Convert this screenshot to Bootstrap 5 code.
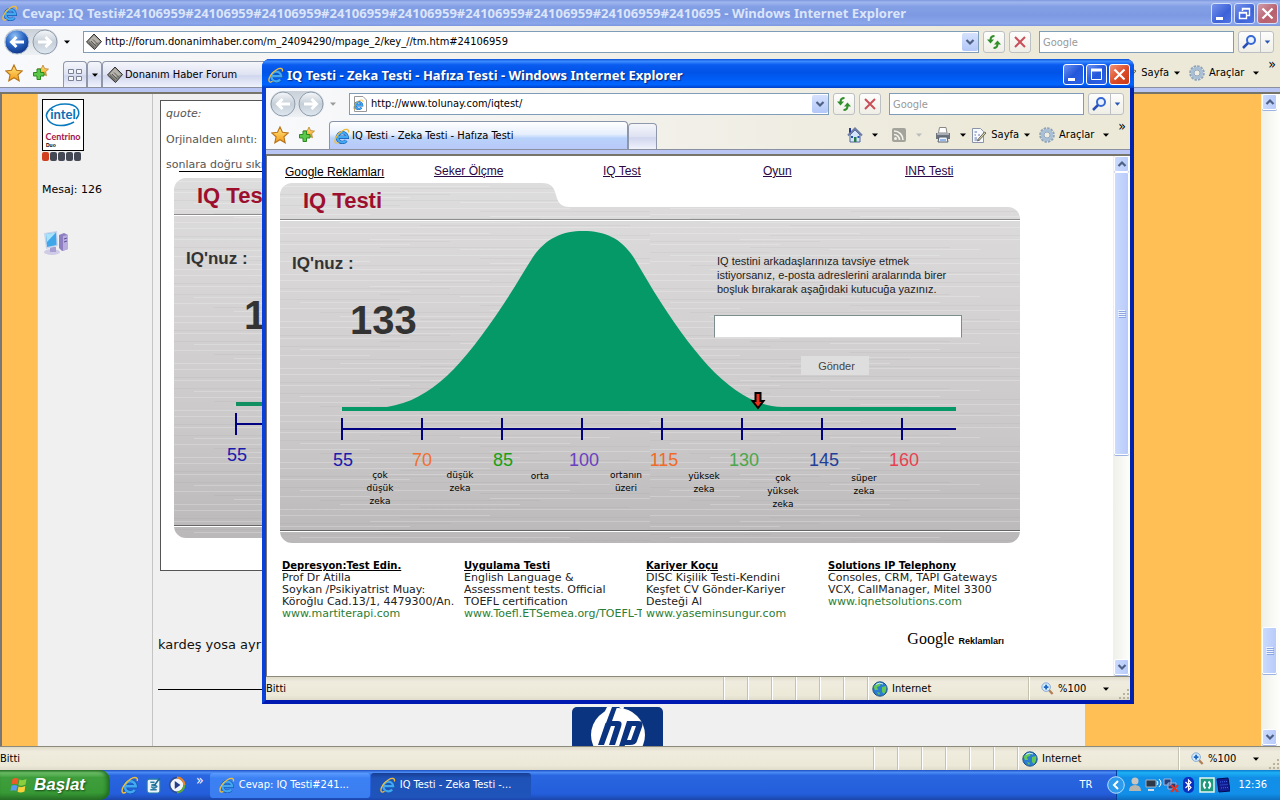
<!DOCTYPE html>
<html lang="tr">
<head>
<meta charset="utf-8">
<meta name="viewport" content="width=device-width, initial-scale=1">
<title>IQ Testi - Zeka Testi - Hafıza Testi</title>
<link href="https://cdn.jsdelivr.net/npm/bootstrap@5.3.0/dist/css/bootstrap.min.css" rel="stylesheet">
<style>
:root{--ui:"DejaVu Sans Condensed","DejaVu Sans",sans-serif;--verd:"DejaVu Sans",sans-serif;--arial:"Liberation Sans",sans-serif}
body{font:11px/14px var(--ui);color:#000;overflow:hidden;background:#f0f0f0}
svg{flex:none;display:block}
button{font:inherit;color:inherit;border:0;background:none;padding:0;display:flex;align-items:center;justify-content:center;flex:none}
input{font:inherit;border:0;padding:0;outline-offset:-1px;min-width:0;border-radius:0}
.min0{min-width:0;min-height:0}
/* window frame */
.titlebar{height:26px;flex:none;padding:0 2px;font:bold 13px/26px "Noto Sans",sans-serif;white-space:nowrap;color:#dbe5fa;background:linear-gradient(#7b96df,#a0b6ee 8%,#839fe5 25%,#7d99e2 60%,#8ba6ea 90%,#7c97df)}
.titlebar .cap-btn{width:21px;height:21px;border:1px solid #d5e0fa;border-radius:3px;background:linear-gradient(135deg,#7592ec,#3d62d8 60%,#4e73e4)}
.titlebar .cap-x{background:linear-gradient(135deg,#d09ba8,#b8606e 60%,#bd6c78)}
.front{position:absolute;left:262px;right:146px;top:59px;bottom:96px;border:4px solid #0831d9;border-top:0;border-color:#0a48dc #0022ac #0019b0 #0a3fd8;border-radius:8px 8px 0 0;background:#0a48dc}
.front .titlebar{height:29px;line-height:30px;margin:0 -4px;padding:2px 4px 0 6px;border-radius:8px 8px 0 0;color:#fff;text-shadow:1px 1px 1px #0a2a80;background:linear-gradient(#0a50d8,#3c8cff 8%,#0a5cf0 20%,#0053e6 45%,#0060fa 75%,#0064ff 88%,#0040c8)}
.front .titlebar .cap-btn{border-color:#fff;background:linear-gradient(135deg,#6d92f4,#2458da 50%,#2a62ea)}
.front .titlebar .cap-x{background:linear-gradient(135deg,#f09478,#dc4a26 55%,#c83a14)}
/* toolbars */
.chrome{background:linear-gradient(90deg,#f8f9fc,#f3f2ee 35%,#ece9d8 85%);flex:none}
.addr-row{height:32px;padding:0 6px 0 4px}
.navpair{gap:2px;background:linear-gradient(#c9d0d8,#eef1f4);border-radius:13px}
.field{height:22px;border:1px solid #7f9db9;background:#fff}
.addr{padding-left:2px;gap:3px}
.drop{width:16px;height:18px;background:linear-gradient(#d5e1fd,#b3c8f8);border-radius:2px}
.tool{width:22px;height:22px;border:1px solid #bcbfc4;border-radius:3px;background:linear-gradient(#fdfdfc,#efeee6)}
.search{width:195px;padding-left:3px}
.search::placeholder{color:#999;opacity:1}
.search-btn{width:36px}
.search-btn svg+svg{border-left:1px solid #bcbfc4;height:20px}
.tab-row{height:30px;border-bottom:1px solid #8a90a0;padding:0 4px 0 5px}
.favs{gap:10px;margin-right:14px}
.band{height:6px;background:#b9c6f3;border-bottom:2px solid #77756a}
.tab-on{height:28px;border:1px solid #8a95ac;border-bottom:0;border-radius:4px 4px 0 0;background:linear-gradient(#fff,#e6effd 45%,#b8d2fb 60%,#b9c9f8);padding-left:4px;gap:2px}
.tab-off{height:26px;border:1px solid #8f97aa;border-bottom:0;border-radius:4px 4px 0 0;background:linear-gradient(#f5f6fb,#dfe2f2 50%,#d0d6ee 55%,#f0f2fb);gap:2px}
.gap12{margin:0 12px 0 8px}
.more{align-self:flex-start;line-height:12px;font-size:14px}
/* scroll bars */
.sbar{width:17px;flex:none;background:linear-gradient(90deg,#f0f0ea,#fefefb);padding:0 1px 1px}
.sbtn,.thumb{width:15px;border:1px solid #fff;border-radius:2px;background:linear-gradient(90deg,#cbdafd,#b8cbf9);box-shadow:0 1px #9db2e0}
.sbtn{height:16px}
/* status bar */
.status{height:24px;flex:none;border-top:1px solid #8c8a7c;background:linear-gradient(#dedbc8,#efecdf 20%,#ece9d8 80%,#dfdccb);line-height:22px}
.cell{width:24px;border-left:1px solid #c5c2b0;box-shadow:inset 1px 0 #fff;align-self:stretch}
.zone{width:161px}
.zoom{width:102px;padding-left:12px}
/* forum page */
.orange{background:#ffbf55;flex:none}
.side{width:116px;flex:none;border-left:1px solid #cfcfcf;border-right:1px solid #c4c4c4;padding:5px 4px;font-family:var(--verd);background:#f0f0f0}
.forum{font-family:var(--verd);padding:6px 0 0 7px;background:#f0f0f0;white-space:nowrap}
.quote{border:1px solid #555;background:#fff;height:471px;color:#555;padding:6px 5px 5px;line-height:14px}
.quote p{margin:0 0 12px}
.quote .tail{margin:0;line-height:12px}
.rule{border-top:1px solid #000}
/* test page */
.page{background:#fff;font-family:var(--arial);padding:8px 0 0 13px;overflow:hidden}
.toplinks{display:grid;grid-template-columns:149px 169px 160px 142px 120px;font-size:12px;line-height:14px;padding-left:5px;height:19px}
.toplinks a{color:#2a0845}
.toplinks a:first-child{color:#000;padding-top:1px}
.panel{display:grid;width:740px;height:360px;font-family:var(--arial)}
.panel>*{grid-area:1/1}
.panel h1{font-size:22px;font-weight:700;line-height:36px;height:36px;margin:0;padding-left:23px;color:#9c0f2e}
.nar{font-family:"Liberation Sans Narrow",var(--arial);font-weight:700;color:#333}
.iqlabel{font-size:17px;line-height:24px;padding:33px 0 0 12px}
.score{font-size:40px;line-height:56px;padding:16px 0 0 70px}
.invite{width:248px;margin:35px 58px 0 0;line-height:14px;color:#222}
.invite label{padding-left:3px;white-space:nowrap}
.invite input{height:23px;border:1px solid #7d8c8c;border-bottom-color:#ddd;background:#fff;margin:19px 0 18px}
.send{width:68px;height:19px;background:#dedede;color:#444;margin-left:87px;padding-left:3px}
.ads{display:grid;grid-template-columns:repeat(4,182px);font:11px/12px var(--verd);padding:17px 0 0 2px;color:#222}
.ads div{white-space:nowrap;overflow:hidden;margin-right:4px}
.ads a{display:block;color:#2b7d33;text-decoration:none}
.ads a:first-child{color:#000;font-weight:700;font-size:10px;text-decoration:underline}
.gads{width:724px;font:16px/20px "Liberation Serif",serif;padding-top:9px}
.gads b{font:bold 9px/20px var(--arial)}
/* task bar */
.taskbar{height:30px;flex:none;color:#fff;background:linear-gradient(#1f4fc0,#4a8bf5 8%,#2a66e0 18%,#245edb 80%,#1b46ab)}
.quickbar{gap:6px;margin:0 6px 0 11px}
.start{width:110px;align-self:stretch;border-radius:0 10px 10px 0;background:linear-gradient(#2f7a2c,#6fc069 9%,#3f9e3c 25%,#379a35 75%,#2a7228);box-shadow:inset -3px 0 4px #1f6a20;font:italic bold 17px/30px var(--arial);text-shadow:1px 1px 2px #1a4a18;justify-content:flex-start;padding-left:9px}
.task{width:160px;height:25px;border-radius:3px;background:linear-gradient(#5b9bff,#3c81f3 20%,#3a7df0);justify-content:flex-start;padding-left:9px;color:#fff}
.task.on{background:linear-gradient(#173d92,#1e52b7 20%,#1f54bb)}
.tray{align-self:stretch;background:linear-gradient(#0d7bd0,#1db0f5 9%,#1290e8 25%,#118fe9 80%,#0d6fc0);border-left:1px solid #093d9a;padding-right:13px}
</style>
</head>
<body class="vh-100 d-flex flex-column position-relative">
<svg width="0" height="0" class="position-absolute" aria-hidden="true">
<defs>
<linearGradient id="gMetal" x1="0" y1="0" x2="0" y2="1"><stop offset="0" stop-color="#dedddd"/><stop offset=".3" stop-color="#d6d4d5"/><stop offset=".7" stop-color="#cac8c9"/><stop offset="1" stop-color="#bab8b9"/></linearGradient>
<pattern id="brush" width="370" height="47" patternUnits="userSpaceOnUse"><path d="M0 3.500H210M90 9.500H370M0 14.500H130M180 19.500H330M20 25.500H290M0 31.500H90M210 33.500H370M60 39.500H240M0 44.500H370" stroke="#fff" stroke-opacity=".22"/><path d="M120 5.500H370M0 11.500H170M100 17.500H300M0 22.500H120M200 28.500H370M40 35.500H260M140 42.500H350" stroke="#777" stroke-opacity=".07"/></pattern>
<radialGradient id="gBlue" cx=".4" cy=".25" r=".8"><stop offset="0" stop-color="#8fc0f5"/><stop offset=".5" stop-color="#2a66c4"/><stop offset="1" stop-color="#0c2f80"/></radialGradient>
<linearGradient id="gGrey" x1="0" y1="0" x2="0" y2="1"><stop offset="0" stop-color="#f6f8fa"/><stop offset=".5" stop-color="#c6cfd8"/><stop offset="1" stop-color="#dfe8f0"/></linearGradient>
<linearGradient id="gStar" x1="0" y1="0" x2="0" y2="1"><stop offset="0" stop-color="#ffe884"/><stop offset="1" stop-color="#f59a14"/></linearGradient>
<symbol id="plate" viewBox="0 0 740 360"><path d="M12 0H262C271 0 274 4 276 12S281 24 290 24H728A12 12 0 0 1 740 36V348A12 12 0 0 1 728 360H12A12 12 0 0 1 0 348V12A12 12 0 0 1 12 0Z" fill="url(#gMetal)"/><path d="M12 0H262C271 0 274 4 276 12S281 24 290 24H728A12 12 0 0 1 740 36V348A12 12 0 0 1 728 360H12A12 12 0 0 1 0 348V12A12 12 0 0 1 12 0Z" fill="url(#brush)"/><path d="M0 36.500H740" stroke="#8e8c8d"/><path d="M0 37.500H740M0 348.500H740" stroke="#fff"/><path d="M0 347.500H740" stroke="#666"/></symbol>
<symbol id="ie" viewBox="0 0 16 16"><path d="M4 9.200H13.200A4.900 4.900 0 1 0 12.200 12.500" fill="none" stroke="#1259b0" stroke-width="3.400"/><path d="M4 9.200H13.200A4.900 4.900 0 1 0 12.200 12.500" fill="none" stroke="#43a8f2" stroke-width="2.200"/><path d="M14.300 4.500C15.500 1 12 .6 8.500 2.700C4 5.400 .4 10.600 1 13.800C1.300 15.600 3 15.200 4.500 14.300" fill="none" stroke="#f0bd3a" stroke-width="1.300"/></symbol>
<symbol id="iepage" viewBox="0 0 16 16"><path d="M2.500 .5H11L14.500 4V15.500H2.500Z" fill="#fff" stroke="#999"/><use href="#ie" x="1" y="3" width="11" height="11"/></symbol>
<symbol id="back" viewBox="0 0 26 26"><circle cx="13" cy="13" r="12" fill="url(#gBlue)" stroke="#b6c4d6"/><path d="M20 13H8M12.500 8L7.500 13L12.500 18" fill="none" stroke="#fff" stroke-width="3"/></symbol>
<symbol id="backoff" viewBox="0 0 26 26"><circle cx="13" cy="13" r="12" fill="url(#gGrey)" stroke="#8e9cac"/><path d="M20 13H8M12.500 8L7.500 13L12.500 18" fill="none" stroke="#fff" stroke-width="3"/></symbol>
<symbol id="fwd" viewBox="0 0 26 26"><circle cx="13" cy="13" r="12" fill="url(#gGrey)" stroke="#8e9cac"/><path d="M6 13H18M13.500 8L18.500 13L13.500 18" fill="none" stroke="#fff" stroke-width="3"/></symbol>
<symbol id="tri" viewBox="0 0 8 8"><path d="M1 2.500H7L4 5.800Z" fill="currentColor"/></symbol>
<symbol id="chev" viewBox="0 0 10 10"><path d="M1.500 3L5 6.500L8.500 3" fill="none" stroke="#4d6185" stroke-width="2.200"/></symbol>
<symbol id="chevup" viewBox="0 0 10 10"><path d="M1.500 7L5 3.500L8.500 7" fill="none" stroke="#4d6185" stroke-width="2.200"/></symbol>
<symbol id="refresh" viewBox="0 0 16 16"><path d="M8.500 2Q4.500 2 4.500 6M7.500 14Q11.500 14 11.500 10" fill="none" stroke="#2f8f2a" stroke-width="2"/><path d="M1 5.500H8L4.500 9.500ZM8 10.500H15L11.500 6.500Z" fill="#2f8f2a"/></symbol>
<symbol id="stop" viewBox="0 0 16 16"><path d="M3 3L13 13M13 3L3 13" stroke="#c9505a" stroke-width="2"/></symbol>
<symbol id="lens" viewBox="0 0 16 16"><circle cx="10" cy="6" r="4" fill="#eaf2ff" stroke="#3568d4" stroke-width="2"/><path d="M7 9L2 14" stroke="#2850b8" stroke-width="2.500"/></symbol>
<symbol id="star" viewBox="0 0 16 16"><path d="M8 .8L10.200 5.500L15.300 6.100L11.500 9.600L12.600 14.900L8 12.200L3.400 14.900L4.500 9.600L.7 6.100L5.800 5.500Z" fill="url(#gStar)" stroke="#b8761c"/></symbol>
<symbol id="addstar" viewBox="0 0 16 16"><use href="#star" x="4" y="0" width="12" height="13"/><path d="M4 5H7.500V8.500H11V12H7.500V15.500H4V12H.5V8.500H4Z" fill="#5cc84a" stroke="#2a8a20"/></symbol>
<symbol id="quick" viewBox="0 0 16 14"><path d="M1.500 1.500H6.500V5.500H1.500ZM9.500 1.500H14.500V5.500H9.500ZM1.500 8.500H6.500V12.500H1.500ZM9.500 8.500H14.500V12.500H9.500Z" fill="#f6f7fb" stroke="#7b8296"/></symbol>
<symbol id="chip" viewBox="0 0 16 16"><path d="M8 0L15.500 7.500L8.500 15.500L.5 8Z" fill="#8c8a84" stroke="#33322e"/><path d="M8 1.500L14 7.500L8.500 10L3 6.500Z" fill="#b5b3ac"/><path d="M3 8.500L8.500 13.800M5 7L10 12M7 5.500L12 10.500" stroke="#5a5852"/></symbol>
<symbol id="home" viewBox="0 0 16 16"><path d="M3 8V15H13V8L8 3Z" fill="#d3e4fa" stroke="#51679c"/><path d="M1 8.500L8 1.500L15 8.500" fill="none" stroke="#6d7da4" stroke-width="2"/><path d="M2 1H4V5L2 6Z" fill="#223a9a"/><path d="M7 10H9.500V15H7Z" fill="#2a7a48"/><path d="M10.500 9H12.500V11H10.500ZM4 9H6V11H4Z" fill="#2854b8"/></symbol>
<symbol id="rss" viewBox="0 0 16 16"><rect x="1" y="1" width="14" height="14" rx="2" fill="#a3a39c"/><circle cx="4.500" cy="11.500" r="1.500" fill="#f4f3ea"/><path d="M3 7.500A5.500 5.500 0 0 1 8.500 13M3 4A9 9 0 0 1 12 13" fill="none" stroke="#f4f3ea" stroke-width="1.600"/></symbol>
<symbol id="print" viewBox="0 0 16 16"><path d="M4.500 .5H11L12 6H3.500Z" fill="#fff" stroke="#888"/><path d="M1 6H15V12H1Z" fill="#6d737c"/><path d="M2 6H14V8H2Z" fill="#a9aeb6"/><path d="M4 10H12L13 15H3Z" fill="#eef3fb" stroke="#56606e"/><path d="M5 13H11" stroke="#3d7edb"/></symbol>
<symbol id="pageic" viewBox="0 0 16 16"><path d="M1.500 1.500H9.500L12.500 4.500V15.500H1.500Z" fill="#f7f9fd" stroke="#8994a8"/><path d="M3.500 5H6M3.500 8H5M7 8H9M3.500 11H6M3.500 13H9" stroke="#6277b8"/><path d="M15 6L8.500 13L6.500 13.800L7.500 11.800L13.500 5Z" fill="#d8d2ae" stroke="#6a6a5c"/></symbol>
<symbol id="gear" viewBox="0 0 16 16"><circle cx="8" cy="8" r="6.600" fill="none" stroke="#8fa3b8" stroke-width="2.400" stroke-dasharray="2.450 1"/><circle cx="8" cy="8" r="4.700" fill="#f0f1ec" stroke="#a9bfd6" stroke-width="3"/><circle cx="8" cy="8" r="3" fill="#efede2" stroke="#7e98b4" stroke-width=".8"/></symbol>
<symbol id="globe" viewBox="0 0 16 16"><circle cx="8" cy="8" r="7.200" fill="#2a7cd0" stroke="#1b5288"/><path d="M3 4Q6 1 9 2L8 5L5 6L6 9L3 9Q1 6 3 4ZM10 6L14 5Q15 9 12 13L10 11ZM5 11L8 12L7 14Z" fill="#64c854"/><path d="M4 3.500Q7 1 11 3" fill="none" stroke="#c9ecff"/></symbol>
<symbol id="zoomic" viewBox="0 0 14 14"><path d="M8 8L12.500 13" stroke="#b0805a" stroke-width="2.500"/><circle cx="5.500" cy="5.500" r="4.600" fill="#d8ecff" stroke="#7ba4cc"/><path d="M3 5.500H8M5.500 3V8" stroke="#1d66c0" stroke-width="2"/></symbol>
<symbol id="grip" viewBox="0 0 12 12"><path d="M9 1H11V3H9ZM9 5H11V7H9ZM5 5H7V7H5ZM9 9H11V11H9ZM5 9H7V11H5ZM1 9H3V11H1Z" fill="#b8b39c"/></symbol>
<symbol id="gripv" viewBox="0 0 8 8"><path d="M0 .5H7M0 2.500H7M0 4.500H7M0 6.500H7" stroke="#eef4fe"/><path d="M1 1.500H8M1 3.500H8M1 5.500H8M1 7.500H8" stroke="#8ca6e4"/></symbol>
<symbol id="cmin" viewBox="0 0 19 19"><path d="M4 13H11V16H4Z" fill="#fff"/></symbol>
<symbol id="cmax" viewBox="0 0 19 19"><path d="M4.500 5V14.500H14.500V5" fill="none" stroke="#fff"/><path d="M4 3.500H15V6.500H4Z" fill="#fff"/></symbol>
<symbol id="crest" viewBox="0 0 19 19"><path d="M7.500 7V4.500H14.500V11.500H12M4.500 8.500H11.500V14.500H4.500ZM7 5H15M4 9H12" fill="none" stroke="#fff" stroke-width="1.400"/></symbol>
<symbol id="cx" viewBox="0 0 19 19"><path d="M4.500 4.500L14.500 14.500M14.500 4.500L4.500 14.500" stroke="#fff" stroke-width="2.200"/></symbol>
</defs>
</svg>

<!-- forum window -->
<section class="d-flex flex-column flex-fill min0" aria-label="Donanım Haber Forum">
  <div class="titlebar d-flex align-items-center">
    <svg width="16" height="16" class="me-1"><use href="#ie"/></svg>
    <span class="flex-fill overflow-hidden min0">Cevap: IQ Testi#24106959#24106959#24106959#24106959#24106959#24106959#24106959#24106959#2410695 - Windows Internet Explorer</span>
    <div class="d-flex" style="gap:2px"><button class="cap-btn" aria-label="Simge durumuna küçült"><svg width="19" height="19"><use href="#cmin"/></svg></button><button class="cap-btn" aria-label="Geri yükle"><svg width="19" height="19"><use href="#crest"/></svg></button><button class="cap-btn cap-x" aria-label="Kapat"><svg width="19" height="19"><use href="#cx"/></svg></button></div>
  </div>
  <div class="chrome">
    <div class="addr-row d-flex align-items-center">
      <div class="navpair d-flex"><button aria-label="Geri"><svg width="26" height="26"><use href="#back"/></svg></button><button aria-label="İleri"><svg width="26" height="26"><use href="#fwd"/></svg></button></div>
      <button style="margin:0 12px 0 5px" aria-label="Geçmiş"><svg width="8" height="8"><use href="#tri"/></svg></button>
      <div class="field addr flex-fill min0 d-flex align-items-center"><svg width="16" height="16"><use href="#chip"/></svg><input class="flex-fill" aria-label="Adres" value="http://forum.donanimhaber.com/m_24094290/mpage_2/key_//tm.htm#24106959"><button class="drop" aria-label="Adresler"><svg width="10" height="10"><use href="#chev"/></svg></button></div>
      <button class="tool ms-1" aria-label="Yenile"><svg width="16" height="16"><use href="#refresh"/></svg></button><button class="tool mx-1" aria-label="Dur"><svg width="16" height="16"><use href="#stop"/></svg></button>
      <input class="field search mx-1" type="search" placeholder="Google" aria-label="Google araması">
      <button class="tool search-btn" aria-label="Ara"><svg width="21" height="16" viewBox="-2 0 21 16"><use href="#lens" width="16" height="16"/></svg><svg width="13" height="20" viewBox="0 0 13 20" color="#2a56b4"><use href="#tri" x="3" y="6" width="8" height="8"/></svg></button>
    </div>
    <div class="tab-row d-flex align-items-end">
      <div class="favs d-flex align-self-center"><svg width="18" height="18"><use href="#star"/></svg><svg width="16" height="16"><use href="#addstar"/></svg></div>
      <button class="tab-off" style="width:24px" aria-label="Hızlı sekmeler"><svg width="16" height="14"><use href="#quick"/></svg></button><button class="tab-off" style="width:15px" aria-label="Sekme listesi"><svg width="8" height="8"><use href="#tri"/></svg></button>
      <div class="tab-off d-flex align-items-center ps-1" style="width:300px"><svg width="16" height="16"><use href="#chip"/></svg><span>Donanım Haber Forum</span></div>
      <div class="ms-auto d-flex align-items-center align-self-center"><svg width="16" height="16"><use href="#pageic"/></svg><a href="#" class="text-reset text-decoration-none mx-1">Sayfa</a><svg width="8" height="8" class="me-2"><use href="#tri"/></svg><svg width="16" height="16"><use href="#gear"/></svg><a href="#" class="text-reset text-decoration-none mx-1">Araçlar</a><svg width="8" height="8" class="ms-1 me-2"><use href="#tri"/></svg></div><span class="more">»</span>
    </div>
    <div class="band"></div>
  </div>
  <div class="d-flex flex-fill min0 overflow-hidden bg-white">
    <div class="orange" style="width:37px;border-left:2px solid #777"></div>
    <aside class="side">
      <svg width="42" height="52" viewBox="0 0 42 52"><rect x=".5" y=".5" width="41" height="51" fill="#fff" stroke="#000"/><path d="M6 21C1 14 10 5 23 5C36 5 40 13 34 20M6 21C12 29 25 27 32 23" fill="none" stroke="#0a7abf" stroke-width="1.500"/><text x="21" y="20" font-family="Lato,sans-serif" font-weight="700" font-size="13" fill="#0a6fb5" text-anchor="middle">intel</text><text x="21" y="41" font-family="Lato,sans-serif" font-weight="700" font-size="9" fill="#a3154c" text-anchor="middle">Centrino</text><text x="4" y="48" font-family="Liberation Sans,sans-serif" font-weight="700" font-size="5">Duo</text></svg>
      <svg width="42" height="11" viewBox="0 0 42 11"><rect x="0" y="1" width="7" height="9" rx="2" fill="#d04020"/><rect x="8" y="1" width="7" height="9" rx="2" fill="#444854"/><rect x="16" y="1" width="7" height="9" rx="2" fill="#444854"/><rect x="24" y="1" width="7" height="9" rx="2" fill="#444854"/><rect x="32" y="1" width="7" height="9" rx="2" fill="#444854"/></svg>
      <div style="margin:21px 0 33px">Mesaj: 126</div>
      <svg width="28" height="26" viewBox="0 0 28 26"><path d="M17 5L22 3L26 5V19L20 21L17 18Z" fill="#8e7fc0"/><path d="M21 6L26 5V19L21 21Z" fill="#b9acdf"/><path d="M22 9L25 8M22 12L25 11" stroke="#5d4e96"/><ellipse cx="10" cy="22" rx="8" ry="3" fill="#cfcbe6"/><path d="M8 17H14V22H8Z" fill="#a79ed2"/><path d="M2 3L15 1L16 16L4 19Z" fill="#c8d4ea"/><path d="M4 4L14 2.500L14.500 15L5 17Z" fill="#3fa6ea"/><path d="M4 4L14 2.500L5 12Z" fill="#a8e2fb"/></svg>
    </aside>
    <main class="forum flex-fill min0">
      <div class="quote overflow-hidden">
        <p><i>quote:</i></p><p>Orjinalden alıntı:</p><p class="tail">sonlara doğru sıkıldım</p>
        <div class="rule" style="margin:0 0 6px 13px"></div>
        <div class="panel" style="margin-left:8px">
          <svg width="740" height="360"><use href="#plate"/></svg>
          <svg width="740" height="360" viewBox="280 183 740 360"><path d="M342 407H956V411H342Z" fill="#129062"/><path d="M341 429H956M342 418V440" stroke="#000080" stroke-width="2"/><text x="343" y="466" font-size="18" fill="#1a1aae" text-anchor="middle">55</text></svg>
          <div><h1>IQ Testi</h1><div class="nar iqlabel">IQ'nuz :</div><div class="nar score">133</div></div>
        </div>
      </div>
      <div style="font-size:13px;line-height:20px;margin:64px 0 34px -2px;color:#111">kardeş yosa ayrı</div>
      <div class="rule" style="margin-left:-2px;width:600px"></div>
      <svg width="91" height="60" viewBox="0 0 91 60" style="margin:17px 0 0 412px"><rect width="91" height="60" rx="5" fill="#0b3480"/><ellipse cx="46" cy="28" rx="27" ry="27" fill="#fff"/><path d="M39 0H45L40 14H46Q51 14 49 20L43 38H37L43 19H39L32 38H26ZM55 14H66Q72 14 70 20L65 34Q64 38 58 38H53L49 52H43ZM60 19L55 33H59L64 19Z" fill="#0b3480"/><path d="M35 0H40L34 16L28 14ZM47 0H52L51 3Z" fill="#fff"/></svg>
    </main>
    <div class="orange" style="width:176px"></div>
    <div class="sbar d-flex flex-column" style="width:19px"><button class="sbtn" aria-label="Yukarı"><svg width="10" height="10"><use href="#chevup"/></svg></button><button class="thumb mt-auto" style="height:47px" aria-label="Kaydır"><svg width="8" height="8"><use href="#gripv"/></svg></button><button class="sbtn" style="margin-top:55px" aria-label="Aşağı"><svg width="10" height="10"><use href="#chev"/></svg></button></div>
  </div>
  <div class="status d-flex align-items-center"><span class="me-auto">Bitti</span><i class="cell"></i><i class="cell"></i><i class="cell"></i><i class="cell"></i><i class="cell"></i><i class="cell"></i><div class="cell zone d-flex align-items-center ps-1"><svg width="16" height="16" class="me-1"><use href="#globe"/></svg>Internet</div><div class="cell zoom d-flex align-items-center"><svg width="13" height="13" class="me-1"><use href="#zoomic"/></svg>%100<svg width="8" height="8" class="ms-3"><use href="#tri"/></svg><svg width="12" height="12" class="ms-auto align-self-end"><use href="#grip"/></svg></div></div>
</section>

<!-- test window -->
<section class="front d-flex flex-column" aria-label="IQ Testi">
  <div class="titlebar d-flex align-items-center">
    <svg width="16" height="16" style="margin-right:3px"><use href="#ie"/></svg>
    <span class="flex-fill overflow-hidden min0">IQ Testi - Zeka Testi - Hafıza Testi - Windows Internet Explorer</span>
    <div class="d-flex" style="gap:2px"><button class="cap-btn" aria-label="Simge durumuna küçült"><svg width="19" height="19"><use href="#cmin"/></svg></button><button class="cap-btn" aria-label="Ekranı kapla"><svg width="19" height="19"><use href="#cmax"/></svg></button><button class="cap-btn cap-x" aria-label="Kapat"><svg width="19" height="19"><use href="#cx"/></svg></button></div>
  </div>
  <div class="chrome">
    <div class="addr-row d-flex align-items-center">
      <div class="navpair d-flex"><button aria-label="Geri"><svg width="26" height="26"><use href="#backoff"/></svg></button><button aria-label="İleri"><svg width="26" height="26"><use href="#fwd"/></svg></button></div>
      <button style="color:#999;margin:0 12px 0 5px" aria-label="Geçmiş"><svg width="8" height="8"><use href="#tri"/></svg></button>
      <div class="field addr flex-fill min0 d-flex align-items-center"><svg width="16" height="16"><use href="#iepage"/></svg><input class="flex-fill" aria-label="Adres" value="http://www.tolunay.com/iqtest/"><button class="drop" aria-label="Adresler"><svg width="10" height="10"><use href="#chev"/></svg></button></div>
      <button class="tool ms-1" aria-label="Yenile"><svg width="16" height="16"><use href="#refresh"/></svg></button><button class="tool mx-1" aria-label="Dur"><svg width="16" height="16"><use href="#stop"/></svg></button>
      <input class="field search mx-1" type="search" placeholder="Google" aria-label="Google araması">
      <button class="tool search-btn" aria-label="Ara"><svg width="21" height="16" viewBox="-2 0 21 16"><use href="#lens" width="16" height="16"/></svg><svg width="13" height="20" viewBox="0 0 13 20" color="#2a56b4"><use href="#tri" x="3" y="6" width="8" height="8"/></svg></button>
    </div>
    <div class="tab-row d-flex align-items-end">
      <div class="favs d-flex align-self-center"><svg width="18" height="18"><use href="#star"/></svg><svg width="16" height="16"><use href="#addstar"/></svg></div>
      <div class="tab-on d-flex align-items-center" style="width:299px"><svg width="16" height="16"><use href="#ie"/></svg><span>IQ Testi - Zeka Testi - Hafıza Testi</span></div><button class="tab-off" style="width:29px" aria-label="Yeni sekme"></button>
      <div class="ms-auto d-flex align-items-center align-self-center"><svg width="16" height="16"><use href="#home"/></svg><svg width="8" height="8" class="gap12"><use href="#tri"/></svg><svg width="16" height="16"><use href="#rss"/></svg><svg width="8" height="8" class="gap12" color="#bbb"><use href="#tri"/></svg><svg width="16" height="16"><use href="#print"/></svg><svg width="8" height="8" class="ms-2 me-1"><use href="#tri"/></svg><svg width="16" height="16"><use href="#pageic"/></svg><a href="#" class="text-reset text-decoration-none mx-1">Sayfa</a><svg width="8" height="8" class="me-2"><use href="#tri"/></svg><svg width="16" height="16"><use href="#gear"/></svg><a href="#" class="text-reset text-decoration-none mx-1">Araçlar</a><svg width="8" height="8" class="ms-1 me-2"><use href="#tri"/></svg></div><span class="more">»</span>
    </div>
    <div class="band"></div>
  </div>
  <div class="d-flex flex-fill min0 bg-white" style="border-left:1px solid #777">
    <main class="page flex-fill min0">
      <nav class="toplinks"><a href="#">Google Reklamları</a><a href="#">Seker Ölçme</a><a href="#">IQ Test</a><a href="#">Oyun</a><a href="#">INR Testi</a></nav>
      <div class="panel">
        <svg width="740" height="360"><use href="#plate"/></svg>
        <svg width="740" height="360" viewBox="280 183 740 360" font-size="18" text-anchor="middle">
          <path d="M342 407H387C432 400 463 365 503 305C515 287 524 271 533 257C546 238 563 231 583 231C606 231 622 239 634 258L653 290C697 360 735 405 782 407H956V411H342Z" fill="#049966"/>
          <path d="M341 429H956M342 418V440M422 418V440M502 418V440M582 418V440M662 418V440M742 418V440M822 418V440M902 418V440" stroke="#000080" stroke-width="2"/>
          <path d="M755.500 393H760.500V401H763.500L758 408L752.500 401H755.500Z" fill="#e8321c" stroke="#000" stroke-width="2"/>
          <text x="343" y="466" fill="#1a1aae">55</text><text x="422" y="466" fill="#f07030">70</text><text x="503" y="466" fill="#18a018">85</text><text x="584" y="466" fill="#6a40c0">100</text><text x="664" y="466" fill="#f06a28">115</text><text x="744" y="466" fill="#4ca64c">130</text><text x="824" y="466" fill="#20409a">145</text><text x="904" y="466" fill="#e84050">160</text>
          <g font-family="DejaVu Sans,sans-serif" font-size="9">
            <text x="380" y="478">çok</text><text x="380" y="491">düşük</text><text x="380" y="504">zeka</text>
            <text x="460" y="478">düşük</text><text x="460" y="491">zeka</text>
            <text x="540" y="479">orta</text>
            <text x="626" y="478">ortanın</text><text x="626" y="491">üzeri</text>
            <text x="704" y="479">yüksek</text><text x="704" y="492">zeka</text>
            <text x="783" y="481">çok</text><text x="783" y="494">yüksek</text><text x="783" y="507">zeka</text>
            <text x="864" y="481">süper</text><text x="864" y="494">zeka</text>
          </g>
        </svg>
        <div class="d-flex flex-column">
          <h1>IQ Testi</h1>
          <div class="d-flex">
            <div class="nar"><div class="iqlabel">IQ'nuz :</div><div class="score">133</div></div>
            <form class="invite ms-auto"><label for="mails">IQ testini arkadaşlarınıza tavsiye etmek<br>istiyorsanız, e-posta adreslerini aralarında birer<br>boşluk bırakarak aşağıdaki kutucuğa yazınız.</label><input id="mails" class="w-100 d-block" type="text"><button class="send" type="button">Gönder</button></form>
          </div>
        </div>
      </div>
      <div class="ads">
        <div><a href="#">Depresyon:Test Edin.</a>Prof Dr Atilla<br>Soykan /Psikiyatrist Muay:<br>Köroğlu Cad.13/1, 4479300/An.<a href="#">www.martiterapi.com</a></div>
        <div><a href="#">Uygulama Testi</a>English Language &amp;<br>Assessment tests. Official<br>TOEFL certification<a href="#">www.Toefl.ETSemea.org/TOEFL-T</a></div>
        <div><a href="#">Kariyer Koçu</a>DISC Kişilik Testi-Kendini<br>Keşfet CV Gönder-Kariyer<br>Desteği Al<a href="#">www.yaseminsungur.com</a></div>
        <div><a href="#">Solutions IP Telephony</a>Consoles, CRM, TAPI Gateways<br>VCX, CallManager, Mitel 3300<a href="#">www.iqnetsolutions.com</a></div>
      </div>
      <div class="gads text-end">Google <b>Reklamları</b></div>
    </main>
    <div class="sbar d-flex flex-column"><button class="sbtn" aria-label="Yukarı"><svg width="10" height="10"><use href="#chevup"/></svg></button><button class="thumb" style="height:283px" aria-label="Kaydır"><svg width="8" height="8"><use href="#gripv"/></svg></button><button class="sbtn mt-auto" aria-label="Aşağı"><svg width="10" height="10"><use href="#chev"/></svg></button></div>
  </div>
  <div class="status d-flex align-items-center"><span class="me-auto">Bitti</span><i class="cell"></i><i class="cell"></i><i class="cell"></i><i class="cell"></i><i class="cell"></i><i class="cell"></i><div class="cell zone d-flex align-items-center ps-1"><svg width="16" height="16" class="me-1"><use href="#globe"/></svg>Internet</div><div class="cell zoom d-flex align-items-center"><svg width="13" height="13" class="me-1"><use href="#zoomic"/></svg>%100<svg width="8" height="8" class="ms-3"><use href="#tri"/></svg><svg width="12" height="12" class="ms-auto align-self-end"><use href="#grip"/></svg></div></div>
</section>

<!-- task bar -->
<footer class="taskbar d-flex align-items-center">
  <button class="start"><svg width="21" height="20" viewBox="0 0 20 20" class="me-1"><path d="M3 4Q6 2 9 4L8 9.500Q5 8 2 9.500Z" fill="#ee5a28"/><path d="M10 4.500Q13 6 17 4L16 9.500Q12 11.500 9 10Z" fill="#8ccf3c"/><path d="M1.800 10.800Q5 9 7.800 10.800L6.800 16Q4 14.500 1 16Z" fill="#5a9af0"/><path d="M9 11.500Q12 13 15.800 11L15 16.500Q11 18.500 8 16.800Z" fill="#fbd23c"/></svg>Başlat</button>
  <div class="quickbar d-flex align-items-center"><svg width="18" height="18"><use href="#ie"/></svg><svg width="17" height="17" viewBox="0 0 16 16"><rect x="2" y="2" width="12" height="13" rx="2" fill="#e9f5fa" stroke="#2b7ea8"/><path d="M5 5H9M5 12H11M6 8Q9 6 11 9Q8 12 6 9" stroke="#2a7ba0" fill="none" stroke-width="1.500"/><path d="M14 1L8 9" stroke="#1a6a94" stroke-width="1.500"/></svg><svg width="18" height="18" viewBox="0 0 16 16"><circle cx="8" cy="8" r="6.500" fill="#f2f4fb" stroke="#2d4c94" stroke-width="1.500"/><path d="M8 1.500A6.500 6.500 0 0 1 14.500 8" stroke="#e8862c" stroke-width="2" fill="none"/><path d="M14.500 8A6.500 6.500 0 0 1 8 14.500" stroke="#5aa83a" stroke-width="2" fill="none"/><path d="M6 4.500L11 8L6 11.500Z" fill="#253c88"/></svg><span class="align-self-start ps-1" style="font-size:14px;line-height:8px">»</span></div>
  <button class="task" style="margin-right:1px"><svg width="16" height="16" class="me-1"><use href="#ie"/></svg>Cevap: IQ Testi#241...</button><button class="task on"><svg width="16" height="16" class="me-1"><use href="#ie"/></svg>IQ Testi - Zeka Testi -...</button>
  <span class="ms-auto" style="padding-right:24px">TR</span>
  <div class="tray d-flex align-items-center"><svg width="18" height="18" viewBox="0 0 18 18" style="margin-left:-10px"><circle cx="9" cy="9" r="8.300" fill="#2f9bec" stroke="#b8def8"/><path d="M11 5L7 9L11 13" fill="none" stroke="#fff" stroke-width="2"/></svg>
    <svg width="104" height="18" viewBox="0 0 104 18" style="margin:0 8px 0 1px"><circle cx="9" cy="5" r="3.500" fill="#c9c6c0"/><path d="M3 15Q3 9 9 9T15 15Z" fill="#b9b6ae"/><path d="M20 4H30V11H20Z" fill="#2d3948" stroke="#9fb4c6"/><path d="M22 14H28" stroke="#d5dde4" stroke-width="2"/><path d="M31 5Q33 7 31 9M33 3Q37 7 33 11" fill="none" stroke="#fff"/><path d="M38 3H45V9H38ZM42 7H50V13H42Z" fill="#26407a" stroke="#9fb4e0"/><path d="M45 9L52 16M52 9L45 16" stroke="#e83020" stroke-width="2"/><rect x="57" y="1" width="11" height="16" rx="5" fill="#0a2ec0"/><path d="M59.500 6L65 11.500L62.500 14V4L65 6.500L59.500 12" fill="none" stroke="#fff" stroke-width="1.200"/><rect x="74" y="2" width="14" height="14" fill="#1f9a7c" stroke="#e6f6f0" stroke-width="1.500"/><path d="M79.500 5.500Q76 9 79.500 12.500M82.500 5.500Q86 9 82.500 12.500" fill="none" stroke="#fff" stroke-width="2"/><path d="M91 3L102 2L104 15L93 16Z" fill="#101c90" stroke="#040a50"/><path d="M94 6L101 5.500M94.500 9L101.500 8.500M95 12L102 11.500" stroke="#4466e8" stroke-dasharray="1 1"/></svg>12:36</div>
</footer>
<script src="https://cdn.jsdelivr.net/npm/bootstrap@5.3.0/dist/js/bootstrap.bundle.min.js"></script>
</body>
</html>
